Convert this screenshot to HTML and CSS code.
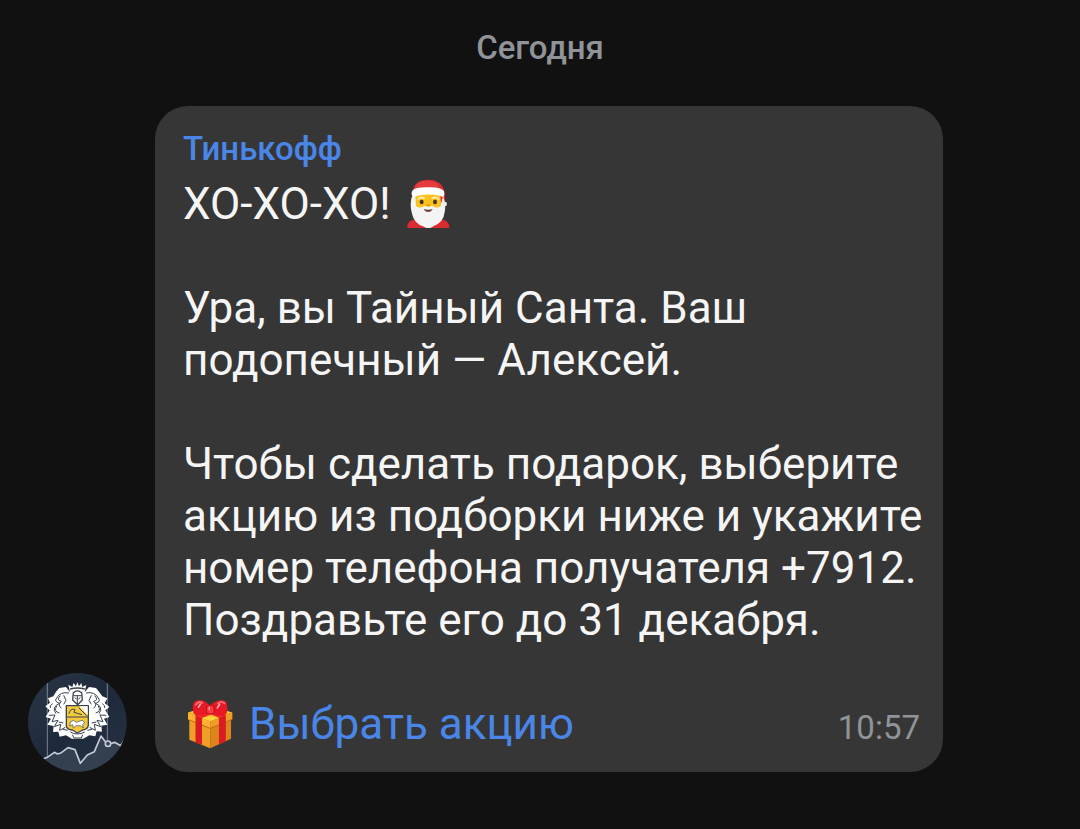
FILE: index.html
```html
<!DOCTYPE html>
<html lang="ru">
<head>
  <meta charset="UTF-8">
  <meta name="viewport" content="width=device-width, initial-scale=1.0">
  <title>Тинькофф</title>
  <link rel="stylesheet" href="styles.css">
</head>
<body>
  <main class="chat">
    <div class="date">Сегодня</div>
    <div class="message">
      <svg class="avatar" viewBox="24 24 297 297" aria-hidden="true">
        <defs>
          <clipPath id="round"><circle cx="172" cy="172" r="148"/></clipPath>
          <linearGradient id="night" x1="0" y1="0" x2="1" y2="1">
            <stop offset="0" stop-color="#2b3747"/>
            <stop offset="0.5" stop-color="#1e2a3b"/>
            <stop offset="1" stop-color="#273244"/>
          </linearGradient>
        </defs>
        <g clip-path="url(#round)">
          <rect x="24" y="24" width="297" height="297" fill="url(#night)"/>
          <path d="M70 281 L82 277 103 262 113 267 124 263 144 248 165 254 181 295 202 270 223 260 243 213 257 232 275 236 284 232 302 242 321 215 V321 H60z" fill="#343f50"/>
          <path d="M82 45V280M262 50V228" stroke="#a7afba" stroke-width="2"/>
          <path d="M70 281 L82 277 103 262 113 267 124 263 144 248 165 254 181 295 202 270 223 260 243 213 256 230M273 235 L284 232 302 242 321 215" fill="none" stroke="#c5cbd4" stroke-width="5" stroke-linejoin="round"/>
          <circle cx="264" cy="236" r="8" fill="#343f50" stroke="#c5cbd4" stroke-width="5"/>
        </g>
        <!-- crest -->
        <g stroke="#3a434e" stroke-linejoin="round">
          <path d="M150 82 L145 59 157 66 161 54 168 64 172 52 177 64 184 54 187 66 199 60 194 82 207 66 228 69 237 80 247 94 262 100 254 114 268 126 256 136 268 156 252 161 262 179 244 182 246 200 230 199 226 214 208 211 190 221 155 221 138 211 119 215 115 200 99 201 101 183 82 179 93 161 77 156 89 136 76 124 90 113 84 100 100 94 108 80 118 69 138 66z" fill="#fff" stroke="none"/>
          <path d="M147 84Q121 79 110 99Q101 110 119 115Q93 126 108 146M121 92Q108 106 124 109Q112 119 124 130M98 116Q88 122 91 129M86 151L105 150 96 170 114 166 103 185 122 178 119 196 136 187M131 91L138 106 131 118M110 123Q100 139 118 144M116 171L130 174M129 193L143 196" fill="none" stroke-width="3"/>
          <path d="M198 84Q224 79 235 99Q244 110 226 115Q252 126 237 146M224 92Q237 106 221 109Q233 119 221 130M247 116Q257 122 254 129M259 151L240 150 249 170 231 166 242 185 223 178 226 196 209 187M214 91L207 106 214 118M235 123Q245 139 227 144M229 171L215 174M216 193L202 196" fill="none" stroke-width="3"/>
          <path d="M150 72Q172 66 195 72M160 83Q172 72 185 83L187 105 173 119 158 105z" fill="#fff" stroke-width="4"/>
          <path d="M160 92H185M172 92V117M164 98L170 102M181 98L175 102" fill="none" stroke-width="3"/>
          <path d="M139 122H205V181Q203 193 188 195L172 204 157 195Q140 194 139 182z" fill="#f3ca3c" stroke-width="4"/>
          <path d="M178 124H203V150z" fill="#fff" stroke="none"/>
          <path d="M139 156H205" stroke-width="3"/>
          <path d="M147 146Q150 130 165 133L162 142 186 149M176 128L200 152" fill="none" stroke-width="3"/>
          <path d="M151 171L160 166 169 172 186 166 194 172 188 179 190 189 181 182 167 183 160 189 158 179 149 183z" fill="#fff" stroke-width="2"/>
          <path d="M151 201Q172 213 194 201M157 209L162 219M188 209L184 219M162 219H184" fill="none" stroke-width="3"/>
        </g>
      </svg>
      <article class="bubble">
        <h1 class="sender">Тинькофф</h1>
        <p class="text">ХО-ХО-ХО!
          <svg class="emoji" viewBox="33 27 135 147" role="img" aria-label="Санта">
            <path d="M37 174Q36 151 61 148H139Q163 152 163 174z" fill="#d92c31"/>
            <path d="M58 72H141V124H58z" fill="#fbc11f"/>
            <path d="M55 58Q60 30 100 29Q144 31 149 68L151 97 138 98 135 67z" fill="#d92c31"/>
            <path d="M80 34Q63 40 58 56L132 58Q133 42 119 36Q106 31 80 34z" fill="#e53c3e"/>
            <path d="M51 79Q43 103 51 131Q57 161 87 170Q101 180 115 169Q146 157 149 126Q154 103 144 79L137 108Q126 117 114 109Q101 103 87 109Q71 117 63 108L61 79z" fill="#f5f4f4"/>
            <path d="M53 61Q61 51 100 52Q139 51 147 64Q151 74 145 82Q137 78 127 76Q100 71 74 76Q61 80 54 82Q46 72 53 61z" fill="#fff"/>
            <circle cx="149" cy="102" r="7" fill="#eeeded"/>
            <path d="M70 87Q79 78 87 85M112 85Q122 78 131 87" fill="none" stroke="#fff1bd" stroke-width="5" stroke-linecap="round"/>
            <ellipse cx="80" cy="96" rx="6" ry="7" fill="#493126"/>
            <ellipse cx="120" cy="96" rx="6" ry="7" fill="#493126"/>
            <ellipse cx="100" cy="106" rx="8" ry="4" fill="#eda600"/>
            <path d="M86 117Q99 122 113 117Q109 126 100 126Q90 126 86 117z" fill="#6e4238"/>
          </svg>
        </p>
        <p class="text">Ура, вы Тайный Санта. Ваш подопечный — Алексей.</p>
        <p class="text">Чтобы сделать подарок, выберите акцию из подборки ниже и укажите номер телефона получателя +7912. Поздравьте его до 31 декабря.</p>
        <div class="footer">
          <svg class="emoji" viewBox="24 26 138 150" role="img" aria-label="Подарок">
            <path d="M28 84L92 107V174L28 148z" fill="#ef9f27"/>
            <path d="M92 107L156 82V145L92 174z" fill="#dd851c"/>
            <path d="M24 64L92 43 160 64 92 91z" fill="#ffc52e"/>
            <path d="M24 64L92 91V113L24 86z" fill="#ffb131"/>
            <path d="M92 91L160 64V85L92 113z" fill="#f39b24"/>
            <path d="M28 87L92 113 156 87" fill="none" stroke="#bd6819" stroke-width="3"/>
            <path d="M47 73L67 81V164L47 156zM119 80L140 72V153L119 162z" fill="#d91c22"/>
            <path d="M47 73L101 53 121 60 67 81zM65 58L83 51 140 72 119 80z" fill="#f2272b"/>
            <path d="M68 82L92 76 117 81 92 91z" fill="#ffd43b"/>
            <path d="M91 45C80 24 49 23 42 33Q36 48 41 66Q47 78 63 73Q80 70 92 60Q105 72 124 74Q139 77 143 65Q148 48 141 32C130 22 105 27 91 45z" fill="#e71924"/>
            <path d="M48 40Q56 28 68 35M116 36Q127 28 136 36" fill="none" stroke="#ff6670" stroke-width="6" stroke-linecap="round"/>
            <path d="M62 39L56 48M121 39L114 50" stroke="#ffb0b5" stroke-width="5" stroke-linecap="round"/>
            <path d="M81 46Q92 37 104 46V66Q92 73 81 66z" fill="#ff3b3f" stroke="#b70f19" stroke-width="3"/>
            <path d="M89 48V56" stroke="#ff9da2" stroke-width="4" stroke-linecap="round"/>
          </svg>
          <a class="link" href="#">Выбрать акцию</a>
          <time class="time" datetime="10:57">10:57</time>
        </div>
      </article>
    </div>
  </main>
</body>
</html>
```
FILE: styles.css
```css
body {
  margin: 0;
  background-color: #111;
  color: #f5f5f5;
  font-family: Roboto, sans-serif;
}
.chat {
  padding: 28px 28px 56px;
}
.date {
  margin-bottom: 38px;
  color: #909499;
  font-size: 33px;
  font-weight: 500;
  line-height: 40px;
  text-align: center;
}
.message {
  display: flex;
  align-items: flex-end;
  gap: 28px;
  margin-right: 109px;
}
.avatar {
  flex: none;
  width: 99px;
  height: 99px;
}
.bubble {
  flex: 1;
  box-sizing: border-box;
  padding: 23px 16px 18px 28px;
  border-radius: 33px;
  background-color: #363636;
}
.sender {
  margin: 0 0 9px;
  color: #4986e8;
  font-size: 33px;
  font-weight: 500;
  line-height: 40px;
}
.text {
  margin: 0 0 52px;
  font-size: 44px;
  line-height: 52px;
}
.emoji {
  flex: none;
  width: 45px;
  height: 49px;
  margin: 0 4px 2px;
  vertical-align: bottom;
}
.footer {
  display: flex;
  align-items: baseline;
  line-height: 52px;
}
.footer .emoji {
  align-self: center;
  margin: 0 16px 4px 5px;
}
.link {
  color: #4986e8;
  font-size: 44px;
  text-decoration: none;
}
.time {
  margin-left: auto;
  padding-right: 7px;
  color: #909499;
  font-size: 33px;
}
```
